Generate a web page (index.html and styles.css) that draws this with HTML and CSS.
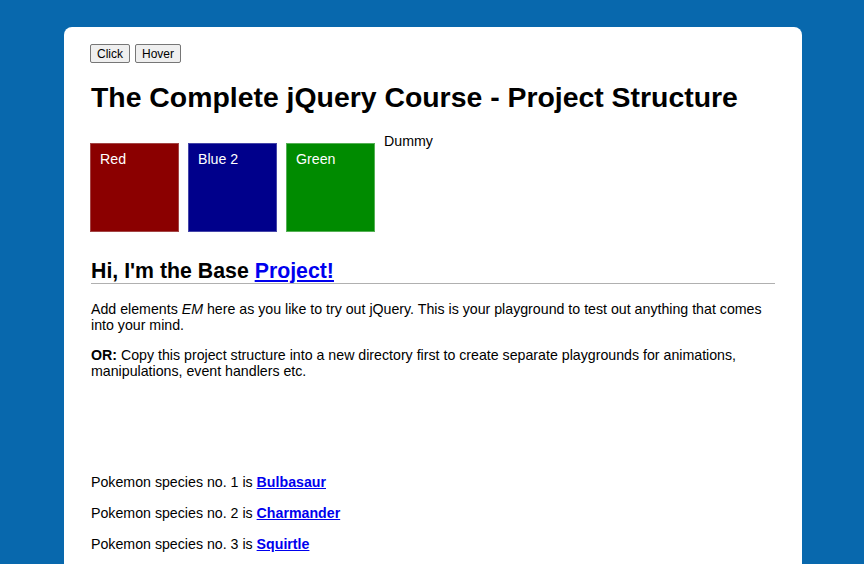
FILE: index.html
```html
<!DOCTYPE html>
<html>
<head>
<meta charset="utf-8">
<link rel="stylesheet" href="styles.css">
</head>
<body>
<div class="container">
  <div class="buttons">
    <button class="btn">Click</button>
    <button class="btn">Hover</button>
  </div>
  <h1 class="title">The Complete jQuery Course - Project Structure</h1>
  <div class="boxes">
    <div class="box red">Red</div>
    <div class="box blue">Blue 2</div>
    <div class="box green">Green</div>
    <span class="dummy">Dummy</span>
  </div>
  <h2 class="subtitle">Hi, I'm the Base <a href="#">Project!</a></h2>
  <p class="text">Add elements <em>EM</em> here as you like to try out jQuery. This is your playground to test out anything that comes into your mind.</p>
  <p class="text"><strong>OR:</strong> Copy this project structure into a new directory first to create separate playgrounds for animations, manipulations, event handlers etc.</p>
  <div class="pokemon">
    <p class="poke">Pokemon species no. 1 is <a href="#"><strong>Bulbasaur</strong></a></p>
    <p class="poke">Pokemon species no. 2 is <a href="#"><strong>Charmander</strong></a></p>
    <p class="poke">Pokemon species no. 3 is <a href="#"><strong>Squirtle</strong></a></p>
  </div>
</div>
</body>
</html>
```
FILE: styles.css
```css
html, body {
  margin: 0;
  padding: 0;
}
body {
  background: #0868ad;
  font-family: "Liberation Sans", Arial, sans-serif;
  font-size: 14.2px;
  color: #000;
  padding-top: 27px;
  overflow: hidden;
}
.container {
  width: 684px;
  margin: 0 0 0 64px;
  background: #fff;
  border-radius: 8px;
  padding: 17px 27px 40px 27px;
  min-height: 520px;
}
.buttons {
  display: flex;
  gap: 5px;
  margin-left: -1px;
}
.btn {
  font-family: "Liberation Sans", Arial, sans-serif;
  font-size: 12px;
  padding: 1px 6px;
  height: 19px;
  background: #efefef;
  border: 1px solid #767676;
  border-radius: 2px;
  color: #000;
}
.title {
  font-size: 28.4px;
  font-weight: bold;
  margin: 18px 0 0 0;
  line-height: 32px;
}
.boxes {
  display: flex;
  align-items: flex-start;
  gap: 9px;
  margin-top: 30px;
  margin-left: -1px;
}
.box {
  width: 78px;
  height: 80px;
  padding: 7px 0 0 9px;
  border: 1px solid;
  color: #fff;
  font-size: 14.2px;
}
.red { background: #8b0000; border-color: #a34444; }
.blue { background: #00008b; border-color: #4444a8; }
.green { background: #008b00; border-color: #55b055; }
.dummy {
  margin-top: -10px;
}
.subtitle {
  font-size: 21.3px;
  font-weight: bold;
  margin: 27px 0 0 0;
  line-height: 24px;
  border-bottom: 1px solid #b0b0b0;
}
.subtitle a { color: #0000ee; }
.text {
  margin: 17px 0 0 0;
  line-height: 16px;
}
.text + .text { margin-top: 14px; }
.pokemon {
  margin-top: 95px;
}
.poke {
  margin: 0 0 14px 0;
  line-height: 17px;
}
.poke a { color: #0000ee; }
```
